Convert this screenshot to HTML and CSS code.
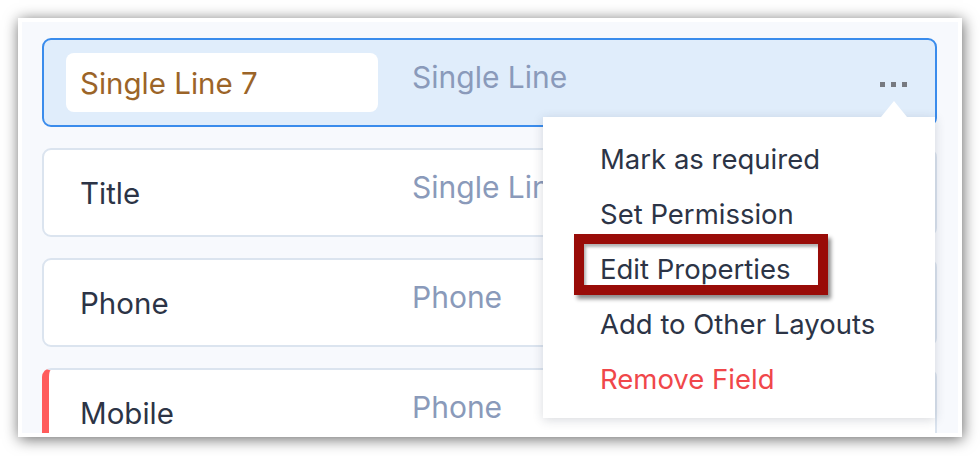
FILE: index.html
```html
<!DOCTYPE html>
<html lang="en">
<head>
<meta charset="utf-8">
<title>Layout fields</title>
<link rel="stylesheet" href="styles.css">
</head>
<body>
<div class="frame">
  <div class="canvas">
    <div class="card card-selected">
      <div class="name name-input">Single Line 7</div>
      <div class="type">Single Line</div>
      <div class="dots"><span></span><span></span><span></span></div>
    </div>
    <div class="card">
      <div class="name">Title</div>
      <div class="type">Single Line</div>
      <div class="dots"><span></span><span></span><span></span></div>
    </div>
    <div class="card">
      <div class="name">Phone</div>
      <div class="type">Phone</div>
      <div class="dots"><span></span><span></span><span></span></div>
    </div>
    <div class="card card-required">
      <div class="name">Mobile</div>
      <div class="type">Phone</div>
      <div class="dots dots-muted"><span></span><span></span><span></span></div>
    </div>

    <div class="menu">
      <div class="menu-item">Mark as required</div>
      <div class="menu-item">Set Permission</div>
      <div class="menu-item">Edit Properties</div>
      <div class="menu-item">Add to Other Layouts</div>
      <div class="menu-item menu-danger">Remove Field</div>
      <div class="highlight"></div>
    </div>
  </div>
</div>
</body>
</html>
```
FILE: styles.css
```css
* { box-sizing: border-box; }

html, body {
  margin: 0;
  padding: 0;
  background: #ffffff;
}

body {
  font-family: Inter, "Open Sans", sans-serif;
  width: 980px;
  height: 456px;
  overflow: hidden;
}

.frame {
  margin: 18px 0 0 18px;
  width: 944px;
  height: 419px;
  border: 4px solid #ffffff;
  box-shadow: 1px 2px 14px rgba(0, 0, 0, 0.6);
  background: #ffffff;
}

.canvas {
  position: relative;
  height: 100%;
  background: #f7f9fd;
  padding: 16px 21px 0 20px;
  display: flex;
  flex-direction: column;
  gap: 21px;
  overflow: hidden;
}

.card {
  flex: none;
  height: 89px;
  border: 2px solid #dbe4ef;
  border-radius: 9px;
  background: #ffffff;
  padding: 0 28px 0 22px;
  display: grid;
  grid-template-columns: 312px 1fr auto;
  column-gap: 34px;
  align-items: center;
}

.card-selected {
  background: #e0edfb;
  border-color: #3a8cec;
}

.card-required {
  border-left: 7px solid #ff5b5b;
  padding-left: 17px;
}

.name {
  font-size: 29.5px;
  line-height: 36px;
  color: #2c3446;
  padding-left: 14px;
  white-space: nowrap;
}

.name-input {
  height: 59px;
  background: #ffffff;
  border-radius: 8px;
  color: #9b6428;
  display: flex;
  align-items: center;
}

.type {
  font-size: 30px;
  line-height: 36px;
  color: #8a9aba;
  padding-bottom: 12px;
  white-space: nowrap;
}

.dots {
  display: flex;
  gap: 6px;
  padding-top: 3px;
}

.dots span {
  width: 5px;
  height: 5px;
  background: #777a80;
}

.dots-muted span {
  background: #56637e;
}

.menu {
  position: absolute;
  left: 521px;
  top: 95px;
  width: 392px;
  height: 301px;
  background: #ffffff;
  box-shadow: 0 2px 10px rgba(40, 50, 70, 0.18);
  padding: 15px 0 0 57px;
}

.menu::before {
  content: "";
  position: absolute;
  top: -16px;
  left: 338px;
  border-left: 13px solid transparent;
  border-right: 13px solid transparent;
  border-bottom: 16px solid #ffffff;
}

.menu-item {
  font-size: 27.5px;
  line-height: 55px;
  color: #2c3446;
  white-space: nowrap;
}

.menu-danger {
  color: #f0474a;
}

.highlight {
  position: absolute;
  left: 31px;
  top: 117px;
  width: 254px;
  height: 61px;
  border: 10px solid #990c08;
  box-shadow: 3px 4px 4px rgba(0, 0, 0, 0.45), inset 2px 3px 3px rgba(0, 0, 0, 0.3);
}
```
